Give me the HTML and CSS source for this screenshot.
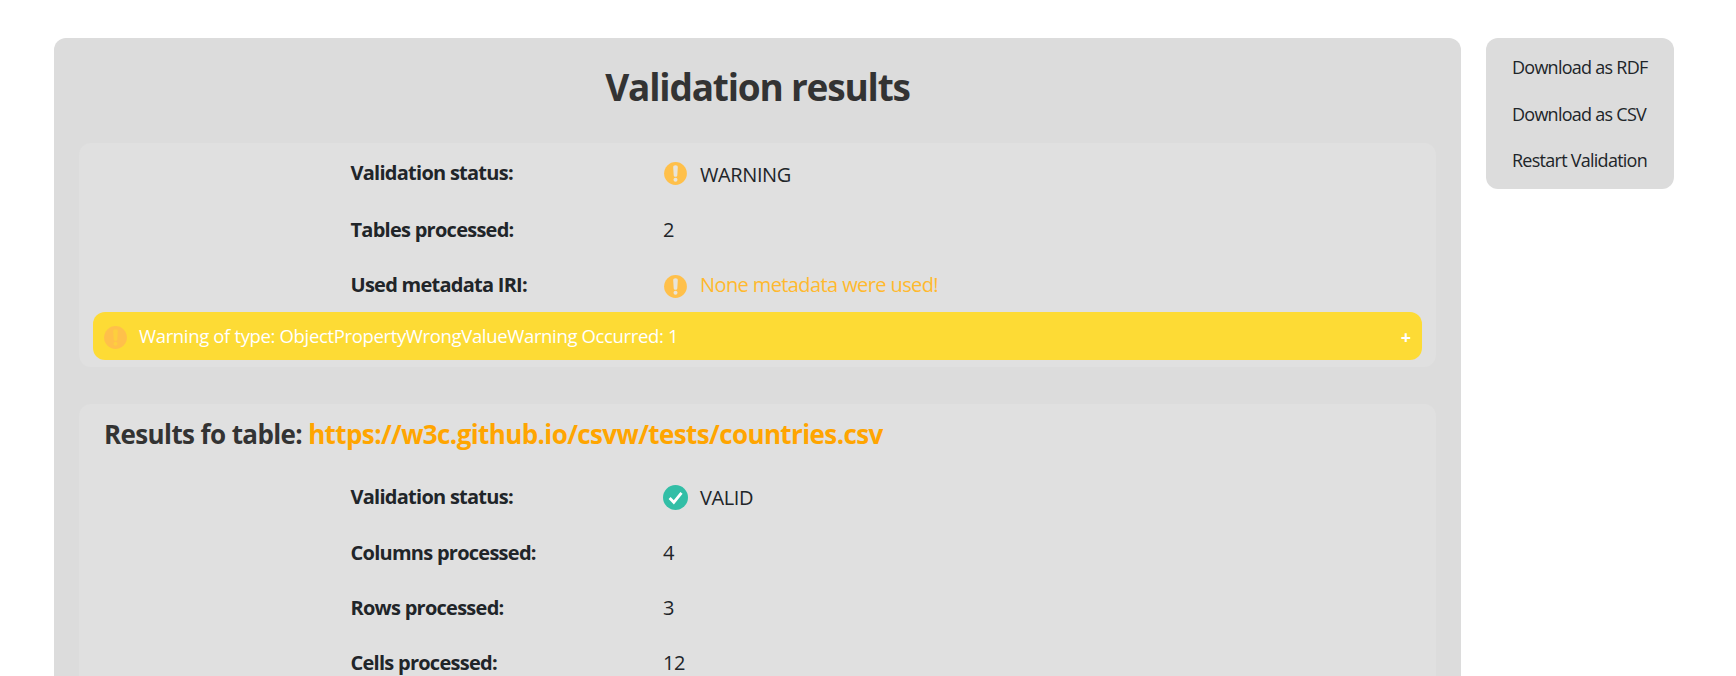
FILE: index.html
```
<!DOCTYPE html>
<html lang="en">
<head>
<meta charset="utf-8">
<title>Validation results</title>
<link rel="stylesheet" href="styles.css">
</head>
<body>
<svg class="defs" width="0" height="0">
  <symbol id="warn" viewBox="0 0 23 23">
    <circle cx="11.5" cy="11.5" r="11.4" fill="#ffc04a"/>
    <path class="mark" d="M11.5 3.3c1.600 0 2.400.9 2.300 2.200l-.5 7.700c-.1 1-.8 1.500-1.800 1.500s-1.700-.5-1.800-1.500l-.5-7.700c-.1-1.300.7-2.200 2.300-2.200z"/>
    <circle class="mark" cx="11.500" cy="17.800" r="2"/>
  </symbol>
  <symbol id="check" viewBox="0 0 25 25">
    <circle cx="12.500" cy="12.500" r="12.500" fill="#32bea6"/>
    <path d="M6.600 13l4.200 4.300L18.500 7.800" fill="none" stroke="#fff" stroke-width="2.800"/>
  </symbol>
</svg>
<div class="page">
  <main class="panel">
    <h1>Validation results</h1>
    <section class="card summary">
      <dl>
        <dt>Validation status:</dt>
        <dd class="status"><svg class="icon"><use href="#warn"/></svg><span>WARNING</span></dd>
        <dt>Tables processed:</dt>
        <dd>2</dd>
        <dt>Used metadata IRI:</dt>
        <dd class="none"><svg class="icon"><use href="#warn"/></svg><span>None metadata were used!</span></dd>
      </dl>
      <div class="alert"><svg class="icon"><use href="#warn"/></svg><span class="message">Warning of type: ObjectPropertyWrongValueWarning Occurred: 1</span><span class="plus">+</span></div>
    </section>
    <section class="card table">
      <h2><span>Results fo table:</span><a>https://w3c.github.io/csvw/tests/countries.csv</a></h2>
      <dl>
        <dt>Validation status:</dt>
        <dd class="valid"><svg class="icon"><use href="#check"/></svg><span>VALID</span></dd>
        <dt>Columns processed:</dt>
        <dd>4</dd>
        <dt>Rows processed:</dt>
        <dd>3</dd>
        <dt>Cells processed:</dt>
        <dd>12</dd>
      </dl>
    </section>
  </main>
  <nav class="actions">
    <a>Download as RDF</a>
    <a>Download as CSV</a>
    <a>Restart Validation</a>
  </nav>
</div>
</body>
</html>
```
FILE: styles.css
```
* { box-sizing: border-box; }
html, body { height: 100%; }
body {
  margin: 0;
  overflow: hidden;
  background: #fff;
  color: #212529;
  font: 20px/30px "Open Sans", "Noto Sans", sans-serif;
  white-space: nowrap;
}
h1, h2, dl, dd { margin: 0; }
.defs { display: block; }
.page {
  display: flex;
  align-items: flex-start;
  gap: 25px;
  height: 676px;
  overflow: hidden;
  padding: 38px 0 0 54px;
}
.panel {
  width: 1407px;
  height: 638px;
  padding: 24px 25px 0;
  border-radius: 12px 12px 0 0;
  background: #dcdcdc;
}
h1 {
  height: 81px;
  color: #333;
  font-size: 37px;
  font-weight: 700;
  letter-spacing: -1.2px;
  line-height: 50px;
  text-align: center;
}
.card {
  border-radius: 12px;
  background: #e0e0e0;
}
.summary {
  height: 224px;
  padding: 15px 14px 0;
}
dl {
  display: grid;
  grid-template-columns: 312.5px 1fr;
}
.summary dl {
  grid-template-rows: 57px 55px 42px;
  padding-left: 257.5px;
}
.table dl {
  grid-template-rows: 56px 55px 55px 30px;
  padding-left: 271.5px;
}
dt { font-weight: 700; letter-spacing: -0.74px; }
dd { display: flex; align-items: flex-start; letter-spacing: -0.4px; }
.icon {
  flex: none;
  width: 23px;
  height: 23px;
  margin: 4px 13px 0 1px;
}
.mark { fill: var(--mark, #e8e4da); }
.status span { padding-top: 2px; }
.none .icon { margin-top: 5px; }
.none { color: #ffb92e; letter-spacing: -0.6px; }
.valid .icon { width: 25px; height: 25px; margin: 3px 12px 0 0; }
.valid span { padding-top: 1px; }
.alert {
  --mark: #fdcf3d;
  display: flex;
  align-items: center;
  height: 48px;
  padding: 0 11px 0 10px;
  border-radius: 12px;
  background: #fddb35;
  color: #fff;
}
.alert .icon { margin: 3px 12px 0 1px; }
.message { font-size: 18.5px; letter-spacing: -0.35px; }
.plus { margin-left: auto; padding-top: 1px; font-size: 18px; font-weight: 700; }
.table {
  height: 272px;
  margin-top: 37px;
  border-radius: 12px 12px 0 0;
}
h2 {
  display: flex;
  gap: 6px;
  height: 78px;
  padding: 13px 0 0 25px;
  color: #333;
  font-size: 26px;
  font-weight: 700;
  letter-spacing: -0.61px;
  line-height: 34px;
}
h2 a { color: #ffa500; }
.actions {
  display: flex;
  flex-direction: column;
  gap: 16.5px;
  width: 188px;
  height: 151px;
  padding: 14px 0 0 26px;
  border-radius: 12px;
  background: #dcdcdc;
  font-size: 18px;
  letter-spacing: -0.74px;
}
```
